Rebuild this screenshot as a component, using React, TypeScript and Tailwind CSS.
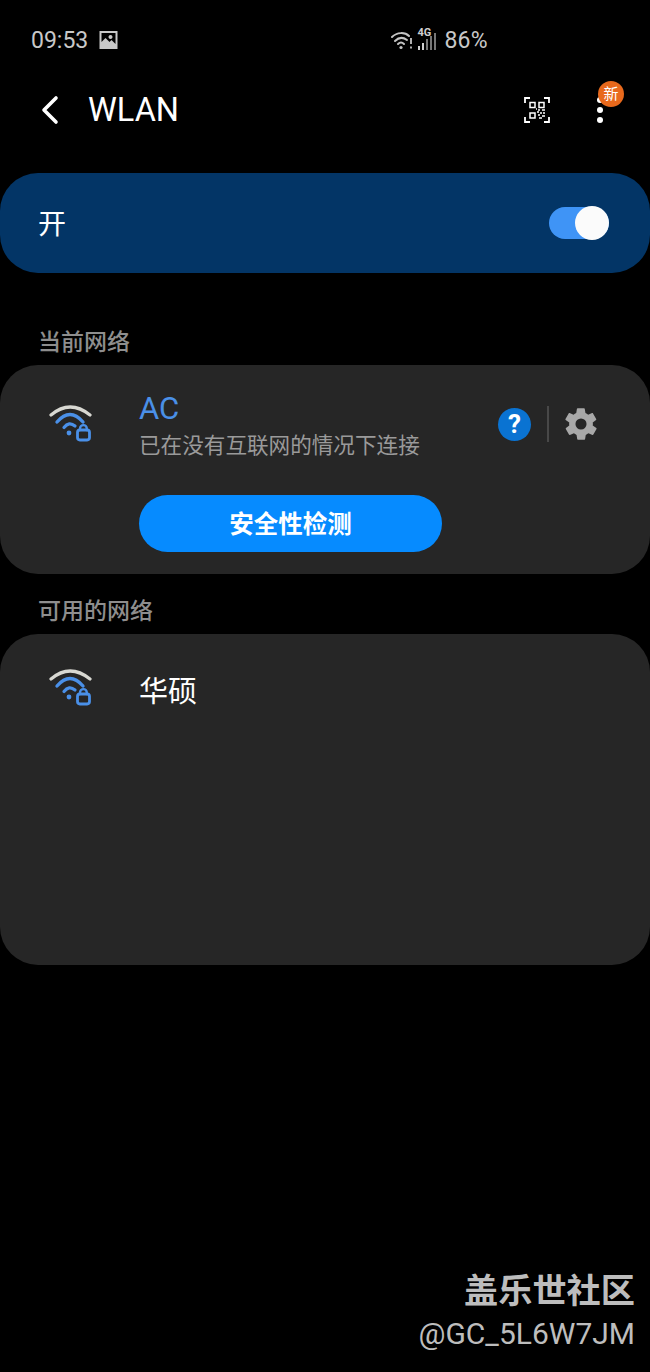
const sans = "font-['Roboto','Noto_Sans_CJK_SC',sans-serif]";

function WifiLock() {
  return (
    <svg width="46" height="38" viewBox="0 0 46 38" fill="none" strokeLinecap="round">
      <path d="M3 11 Q22 -5 42 11" stroke="#d8d8d2" strokeWidth="3.2" />
      <path d="M9 18 Q22 3 35 18" stroke="#4a90e8" strokeWidth="3.4" />
      <path d="M16 23.5 Q21 17 27 22" stroke="#4a90e8" strokeWidth="3.2" />
      <circle cx="21" cy="29" r="2.4" fill="#4a90e8" />
      <path d="M32 26 V24.5 a3.4 3.4 0 0 1 6.8 0 V26" stroke="#4a90e8" strokeWidth="2.4" />
      <rect x="29.5" y="26" width="12" height="10" rx="2.4" stroke="#4a90e8" strokeWidth="2.8" />
    </svg>
  );
}

function Gear() {
  return (
    <svg width="38" height="38" viewBox="0 0 24 24" fill="#a8a8a8">
      <path
        fillRule="evenodd"
        d="M19.4 13c.1-.3.1-.6.1-1s0-.7-.1-1l2.1-1.6c.2-.2.2-.4.1-.6l-2-3.5c-.1-.2-.4-.3-.6-.2l-2.5 1c-.5-.4-1.1-.7-1.7-1l-.4-2.6c0-.3-.2-.4-.5-.4h-4c-.3 0-.5.2-.5.4l-.4 2.6c-.6.3-1.2.6-1.7 1l-2.5-1c-.2-.1-.5 0-.6.2l-2 3.5c-.1.2-.1.5.1.6L4.6 11c-.1.3-.1.7-.1 1s0 .7.1 1l-2.1 1.6c-.2.2-.2.4-.1.6l2 3.5c.1.2.4.3.6.2l2.5-1c.5.4 1.1.7 1.7 1l.4 2.6c0 .3.2.4.5.4h4c.3 0 .5-.2.5-.4l.4-2.6c.6-.3 1.2-.6 1.7-1l2.5 1c.2.1.5 0 .6-.2l2-3.5c.1-.2.1-.5-.1-.6L19.4 13zM12 15.5a3.5 3.5 0 1 1 0-7 3.5 3.5 0 0 1 0 7z"
      />
    </svg>
  );
}

function QrScan() {
  return (
    <svg width="26" height="26" viewBox="0 0 26 26" fill="none" stroke="#fff">
      <path d="M1 6 V1 H6 M20 1 H25 V6 M25 20 V25 H20 M6 25 H1 V20" strokeWidth="1.8" />
      <rect x="6" y="5.5" width="5" height="5" strokeWidth="1.5" />
      <rect x="15" y="5.5" width="5" height="5" strokeWidth="1.5" />
      <rect x="6" y="16" width="5" height="5" strokeWidth="1.5" />
      <path d="M14 13 h2 M18 13 h3 M13 15 h2 M16 16 h2 M19 16 h2 M14 18 h2 M18 19 h3 M15 21 h3 M12 12 h1" strokeWidth="1.6" />
    </svg>
  );
}

function StatusIcons() {
  return (
    <svg width="46" height="24" viewBox="0 0 46 24" fill="none">
      <path d="M1 8 C6 3 14 3 18 7" stroke="#c4c4c4" strokeWidth="2" strokeLinecap="round" />
      <path d="M4 12 C8 8 12 8 16 11" stroke="#c4c4c4" strokeWidth="2" strokeLinecap="round" />
      <path d="M7 15 C9 13 11 13 13 15" stroke="#c4c4c4" strokeWidth="2" strokeLinecap="round" />
      <circle cx="10" cy="18.5" r="1.6" fill="#c4c4c4" />
      <path d="M20 9 V15 M20 17.5 V19.5" stroke="#c4c4c4" strokeWidth="1.8" />
      <path d="M28 17 V21 M32 14 V21" stroke="#d0d0d0" strokeWidth="2" />
      <path d="M36 10 V21 M40 7 V21 M44 4 V21" stroke="#777" strokeWidth="2" />
    </svg>
  );
}

export default function App() {
  return (
    <div className={`${sans} relative flex h-[1372px] w-[650px] flex-col overflow-hidden bg-black text-white`}>
      {/* status bar */}
      <div className="flex h-[80px] items-center pl-[31px] pr-[162px] pt-[2px] text-[23px] text-[#c8c8c8]">
        <span>09:53</span>
        <svg className="ml-[11px] mt-[-2px]" width="19" height="18" viewBox="0 0 18 18">
          <path
            fillRule="evenodd"
            fill="#c8c8c8"
            d="M0 0H18V18H0Z M2 2V11L6 7L10 11L12 9L16 13V2Z M11 4a2 2 0 1 0 .01 0Z"
          />
        </svg>
        <div className="ml-auto flex items-center">
          <div className="relative mr-[7px] h-[24px] w-[46px]">
            <StatusIcons />
            <span className="absolute left-[26px] top-[-3px] text-[11px] font-bold leading-[14px] text-[#d0d0d0]">4G</span>
          </div>
          <span className="tracking-[0.3px]">86%</span>
        </div>
      </div>

      {/* header */}
      <div className="flex h-[60px] items-center pl-[38px] pr-[47px]">
        <svg width="24" height="30" viewBox="0 0 24 30" fill="none">
          <path d="M18 3 L6 15 L18 27" stroke="#fff" strokeWidth="3.6" strokeLinecap="round" strokeLinejoin="round" />
        </svg>
        <span className="ml-[26px] pt-[1px] text-[32.5px] leading-none">WLAN</span>
        <div className="ml-auto flex items-center gap-[47px]">
          <QrScan />
          <div className="relative flex flex-col gap-[4px]">
            <span className="h-[6px] w-[6px] rounded-full bg-white" />
            <span className="h-[6px] w-[6px] rounded-full bg-white" />
            <span className="h-[6px] w-[6px] rounded-full bg-white" />
            <span className="absolute left-[1px] top-[-16px] flex h-[26px] w-[26px] items-center justify-center rounded-full bg-[#e8691c] text-[15px] text-white">
              新
            </span>
          </div>
        </div>
      </div>

      {/* master switch */}
      <div className="mt-[33px] flex h-[100px] items-center justify-between rounded-[38px] bg-[#033566] pl-[38px] pr-[41px]">
        <span className="pt-[3px] text-[28px]">开</span>
        <div className="relative h-[32px] w-[60px] rounded-full bg-[#3f94f6]">
          <span className="absolute right-0 top-[-1px] h-[34px] w-[34px] rounded-full bg-[#fbfbfb]" />
        </div>
      </div>

      <div className="pl-[38px] pt-[56px] pb-[9px] text-[23px] font-medium leading-[27px] text-[#8e8e8e]">当前网络</div>

      {/* current network */}
      <div className="h-[209px] rounded-[38px] bg-[#262626] pl-[48px] pr-[50px] pt-[24px]">
        <div className="flex">
          <div className="pt-[15px]">
            <WifiLock />
          </div>
          <div className="ml-[45px] flex flex-col">
            <span className="pt-[1px] text-[31px] leading-[38px] text-[#4a90e8]">AC</span>
            <span className="text-[21.6px] leading-[36px] text-[#9a9a9a]">已在没有互联网的情况下连接</span>
          </div>
          <div className="ml-auto flex h-[70px] items-center">
            <span className="flex h-[33px] w-[33px] items-center justify-center rounded-full bg-[#0a73d2] text-[26px] font-bold text-white">?</span>
            <span className="ml-[16px] h-[36px] w-[2px] bg-[#484848]" />
            <span className="ml-[13px]">
              <Gear />
            </span>
          </div>
        </div>
        <button className="ml-[91px] mt-[31px] block h-[57px] w-[303px] rounded-full bg-[#068bff] pt-[3px] text-[24.5px] font-bold text-white">
          安全性检测
        </button>
      </div>

      <div className="pl-[38px] pt-[24px] pb-[9px] text-[23px] font-medium leading-[27px] text-[#8e8e8e]">可用的网络</div>

      {/* available networks */}
      <div className="h-[331px] rounded-[38px] bg-[#262626] pl-[48px] pt-[34px]">
        <div className="flex items-start">
          <WifiLock />
          <span className="ml-[45px] pt-[2px] text-[29px] leading-[44px] text-white">华硕</span>
        </div>
      </div>

      {/* watermark */}
      <div className="mt-auto flex flex-col items-end pb-[17px] pr-[15px] text-[#bdbdbd]">
        <span className="text-[34.2px] font-bold leading-[44px]">盖乐世社区</span>
        <span className="text-[30px] leading-[42px]">@GC_5L6W7JM</span>
      </div>
    </div>
  );
}
